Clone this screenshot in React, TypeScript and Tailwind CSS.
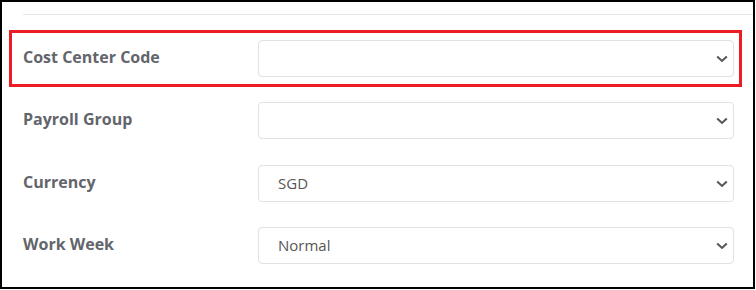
import React from "react";

function Chevron() {
  return (
    <svg width="12" height="8" viewBox="0 0 12 8" className="shrink-0">
      <polyline points="1.2,1.5 6,6 10.8,1.5" fill="none" stroke="#555" strokeWidth="2" />
    </svg>
  );
}

function Select({ value }: { value?: string }) {
  return (
    <div className="w-[476px] h-[37px] shrink-0 rounded-[4px] border border-[#e2e2e2] bg-white flex items-center pl-[19px] pr-[5px]">
      <span className="flex-1 text-[15px] text-[#555]">{value ?? ""}</span>
      <Chevron />
    </div>
  );
}

function Row({ label, value }: { label: string; value?: string }) {
  return (
    <div className="flex items-center h-[37px]">
      <div className="w-[235px] shrink-0 text-[16px] font-bold text-[#62656b] pb-[3px]">{label}</div>
      <Select value={value} />
    </div>
  );
}

export default function App() {
  return (
    <div
      className="w-[755px] h-[289px] border-2 border-black bg-white overflow-hidden"
      style={{ fontFamily: '"Open Sans", "Noto Sans", sans-serif' }}
    >
      <div className="ml-[21px] mt-[12px] h-px bg-[#e8e8e8]" />
      <div className="ml-[7px] mt-[15px] w-[733px] border-[3px] border-[#ec1c24] py-[7px] pl-[11px]">
        <Row label="Cost Center Code" />
      </div>
      <div className="pl-[21px]">
        <div className="mt-[15px]">
          <Row label="Payroll Group" />
        </div>
        <div className="mt-[26px]">
          <Row label="Currency" value="SGD" />
        </div>
        <div className="mt-[25px]">
          <Row label="Work Week" value="Normal" />
        </div>
      </div>
    </div>
  );
}
